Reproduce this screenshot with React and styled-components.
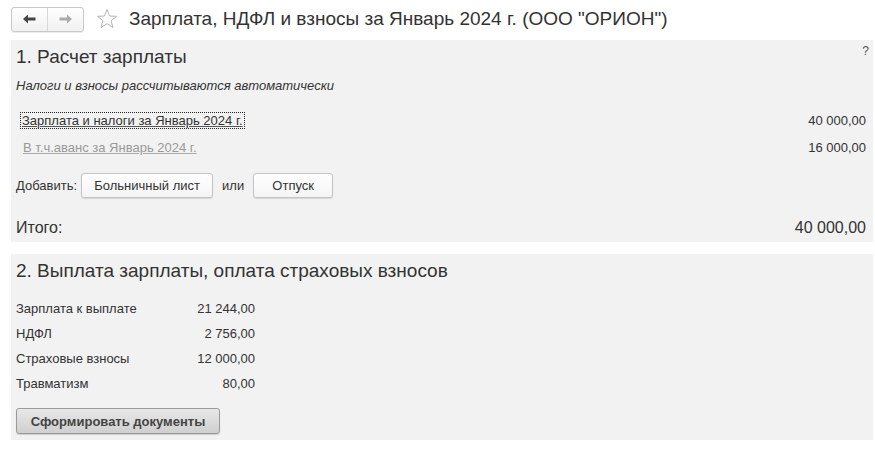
import React from 'react';
import styled, { createGlobalStyle } from 'styled-components';

const GlobalStyle = createGlobalStyle`
  body {
    margin: 0;
    background: #fff;
    font-family: Arial, "Liberation Sans", sans-serif;
    color: #333;
  }
`;

const Page = styled.div`
  width: 875px;
  height: 457px;
  padding: 6px 2px 0 11px;
  box-sizing: border-box;
  display: flex;
  flex-direction: column;
`;

const Header = styled.div`
  display: flex;
  align-items: center;
  height: 26px;
  margin-bottom: 8px;
  flex-shrink: 0;
`;

const NavGroup = styled.div`
  display: flex;
  width: 73px;
  height: 25px;
  border: 1px solid #c8c8c8;
  border-radius: 3px;
  box-sizing: border-box;
  background: linear-gradient(#ffffff, #f1f1f1);
  box-shadow: 0 1px 1px rgba(0, 0, 0, 0.08);
`;

const NavButton = styled.div`
  flex: 1;
  display: flex;
  align-items: center;
  justify-content: center;
  border-left: ${p => (p.$divided ? '1px solid #d8d8d8' : 'none')};
`;

const Star = styled.div`
  margin-left: 12px;
  width: 22px;
  height: 22px;
  display: flex;
`;

const Title = styled.h1`
  margin: 0 0 0 11px;
  font-size: 19px;
  font-weight: normal;
  color: #333;
  white-space: nowrap;
`;

const Panel = styled.section`
  background: #f2f2f2;
  padding: ${p => p.$pad};
  margin-bottom: 12px;
  display: flex;
  flex-direction: column;
  flex-shrink: 0;
  position: relative;

  & > * {
    flex-shrink: 0;
  }
`;

const SectionTitle = styled.h2`
  margin: 0;
  font-size: 19px;
  font-weight: normal;
  color: #333;
  line-height: 22px;
`;

const Help = styled.span`
  position: absolute;
  right: 4px;
  top: 4px;
  font-size: 12px;
  color: #555;
`;

const Note = styled.div`
  font-style: italic;
  font-size: 13px;
  line-height: 16px;
  margin-top: 10px;
`;

const LineRow = styled.div`
  display: flex;
  justify-content: space-between;
  align-items: center;
  font-size: 13px;
  height: 18px;
  margin-top: ${p => p.$top || 0}px;
  padding-right: 7px;
`;

const DocLink = styled.a`
  margin-left: ${p => (p.$focused ? 5 : 6)}px;
  padding: 0 1px;
  color: ${p => (p.$muted ? '#999' : '#333')};
  text-decoration: underline;
  text-decoration-color: ${p => (p.$muted ? '#aaa' : '#555')};
  outline: ${p => (p.$focused ? '1px dotted #222' : 'none')};
  cursor: pointer;
`;

const Amount = styled.span`
  color: #333;
`;

const AddRow = styled.div`
  display: flex;
  align-items: center;
  font-size: 13px;
  margin-top: 17px;
`;

const FlatButton = styled.button`
  height: 25px;
  width: ${p => p.$w}px;
  margin: ${p => p.$m};
  border: 1px solid #c4c4c4;
  border-radius: 3px;
  background: linear-gradient(#ffffff, #f4f4f4);
  box-shadow: 0 1px 1px rgba(0, 0, 0, 0.12);
  font-family: Arial, "Liberation Sans", sans-serif;
  font-size: 13px;
  color: #333;
  padding: 0;
`;

const TotalRow = styled.div`
  display: flex;
  justify-content: space-between;
  font-size: 16px;
  margin-top: 21px;
  padding-right: 7px;
  line-height: 18px;
`;

const Grid = styled.div`
  display: grid;
  grid-template-columns: 150px 89px;
  grid-auto-rows: 25px;
  align-items: center;
  font-size: 13px;
  margin-top: 14px;
`;

const Value = styled.span`
  text-align: right;
`;

const MainButton = styled.button`
  align-self: flex-start;
  margin-top: 12px;
  width: 204px;
  height: 26px;
  border: 1px solid #9a9a9a;
  border-radius: 3px;
  background: linear-gradient(#e8e8e8, #cfcfcf);
  box-shadow: 0 1px 1px rgba(0, 0, 0, 0.15);
  font-family: Arial, "Liberation Sans", sans-serif;
  font-weight: bold;
  font-size: 13px;
  color: #444;
  padding: 0;
`;

const Arrow = ({ dir, color }) => (
  <svg width="13" height="10" viewBox="0 0 13 10">
    <path
      d={dir === 'left' ? 'M0 5 L5 0.5 V3.5 H12.5 V6.5 H5 V9.5 Z' : 'M13 5 L8 0.5 V3.5 H0.5 V6.5 H8 V9.5 Z'}
      fill={color}
    />
  </svg>
);

const payouts = [
  ['Зарплата к выплате', '21 244,00'],
  ['НДФЛ', '2 756,00'],
  ['Страховые взносы', '12 000,00'],
  ['Травматизм', '80,00'],
];

export default function App() {
  return (
    <>
      <GlobalStyle />
      <Page>
        <Header>
          <NavGroup>
            <NavButton><Arrow dir="left" color="#444" /></NavButton>
            <NavButton $divided><Arrow dir="right" color="#aaa" /></NavButton>
          </NavGroup>
          <Star>
            <svg width="22" height="22" viewBox="0 0 22 22">
              <path
                d="M11 1.5 L13.6 8 L20.6 8.3 L15.1 12.7 L17 19.6 L11 15.7 L5 19.6 L6.9 12.7 L1.4 8.3 L8.4 8 Z"
                fill="none"
                stroke="#b5b5b5"
                strokeWidth="1"
                strokeLinejoin="round"
              />
            </svg>
          </Star>
          <Title>Зарплата, НДФЛ и взносы за Январь 2024 г. (ООО "ОРИОН")</Title>
        </Header>

        <Panel $pad="6px 0 5px 5px">
          <Help>?</Help>
          <SectionTitle>1. Расчет зарплаты</SectionTitle>
          <Note>Налоги и взносы рассчитываются автоматически</Note>
          <LineRow $top={17}>
            <DocLink $focused>Зарплата и налоги за Январь 2024 г.</DocLink>
            <Amount>40 000,00</Amount>
          </LineRow>
          <LineRow $top={9}>
            <DocLink $muted>В т.ч.аванс за Январь 2024 г.</DocLink>
            <Amount>16 000,00</Amount>
          </LineRow>
          <AddRow>
            Добавить:
            <FlatButton $w={132} $m="0 9px 0 4px">Больничный лист</FlatButton>
            или
            <FlatButton $w={80} $m="0 0 0 9px">Отпуск</FlatButton>
          </AddRow>
          <TotalRow>
            <span>Итого:</span>
            <span>40 000,00</span>
          </TotalRow>
        </Panel>

        <Panel $pad="6px 0 6px 5px">
          <SectionTitle>2. Выплата зарплаты, оплата страховых взносов</SectionTitle>
          <Grid>
            {payouts.map(([label, value]) => (
              <React.Fragment key={label}>
                <span>{label}</span>
                <Value>{value}</Value>
              </React.Fragment>
            ))}
          </Grid>
          <MainButton>Сформировать документы</MainButton>
        </Panel>
      </Page>
    </>
  );
}
